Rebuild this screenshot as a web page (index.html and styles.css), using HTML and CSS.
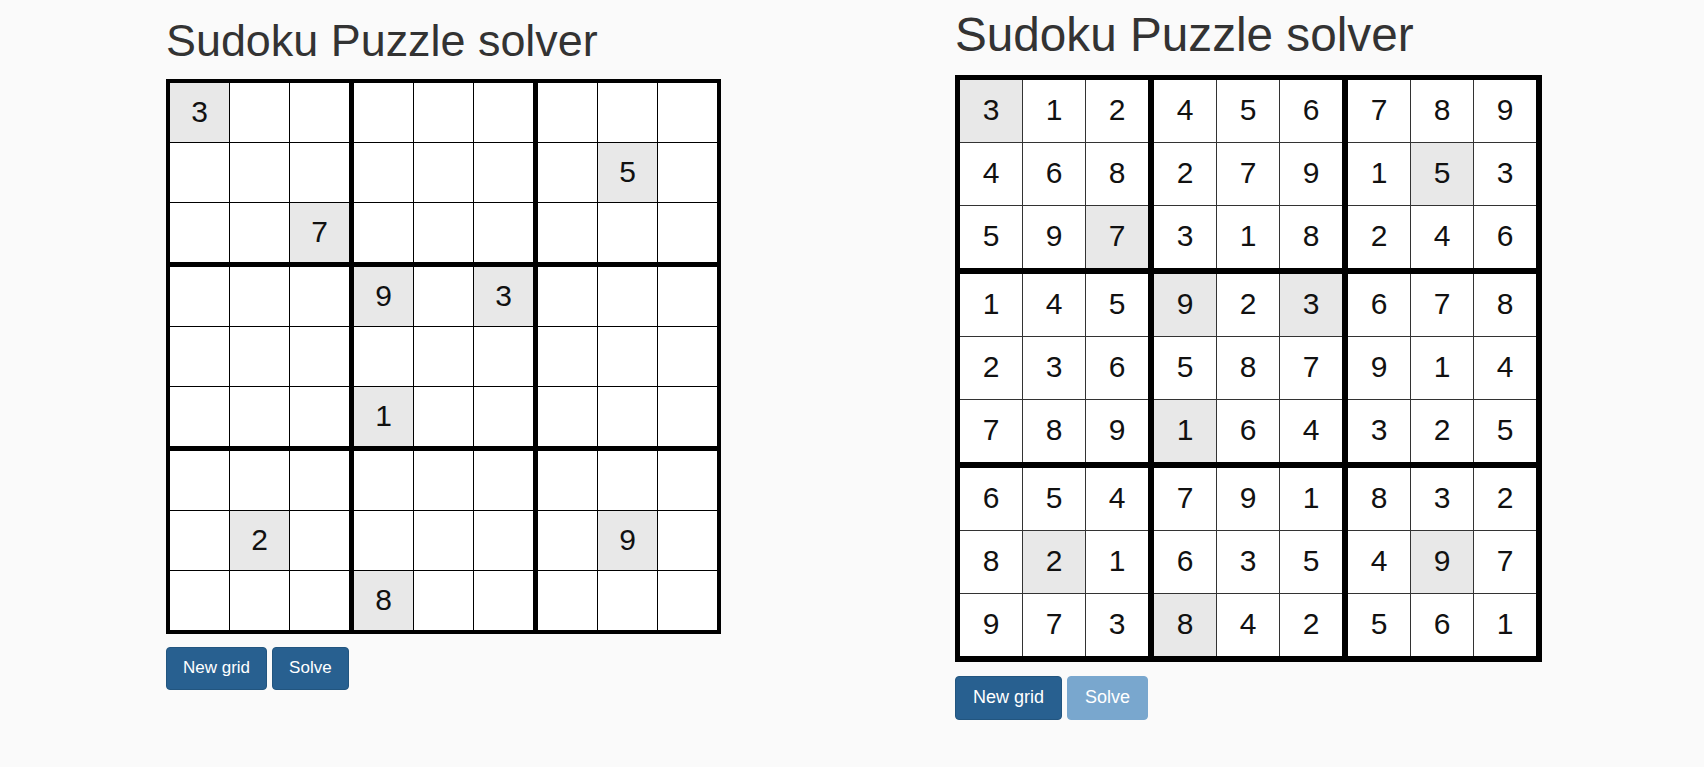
FILE: index.html
```html
<!DOCTYPE html>
<html>
<head>
<meta charset="utf-8">
<title>Sudoku Puzzle solver</title>
<link rel="stylesheet" href="styles.css">
</head>
<body>
<div class="page">
  <section class="panel panel-left">
    <h1 class="title">Sudoku Puzzle solver</h1>
    <div class="board">
      <div class="box"><div class="cell given">3</div><div class="cell"></div><div class="cell"></div><div class="cell"></div><div class="cell"></div><div class="cell"></div><div class="cell"></div><div class="cell"></div><div class="cell given">7</div></div>
      <div class="box"><div class="cell"></div><div class="cell"></div><div class="cell"></div><div class="cell"></div><div class="cell"></div><div class="cell"></div><div class="cell"></div><div class="cell"></div><div class="cell"></div></div>
      <div class="box"><div class="cell"></div><div class="cell"></div><div class="cell"></div><div class="cell"></div><div class="cell given">5</div><div class="cell"></div><div class="cell"></div><div class="cell"></div><div class="cell"></div></div>
      <div class="box"><div class="cell"></div><div class="cell"></div><div class="cell"></div><div class="cell"></div><div class="cell"></div><div class="cell"></div><div class="cell"></div><div class="cell"></div><div class="cell"></div></div>
      <div class="box"><div class="cell given">9</div><div class="cell"></div><div class="cell given">3</div><div class="cell"></div><div class="cell"></div><div class="cell"></div><div class="cell given">1</div><div class="cell"></div><div class="cell"></div></div>
      <div class="box"><div class="cell"></div><div class="cell"></div><div class="cell"></div><div class="cell"></div><div class="cell"></div><div class="cell"></div><div class="cell"></div><div class="cell"></div><div class="cell"></div></div>
      <div class="box"><div class="cell"></div><div class="cell"></div><div class="cell"></div><div class="cell"></div><div class="cell given">2</div><div class="cell"></div><div class="cell"></div><div class="cell"></div><div class="cell"></div></div>
      <div class="box"><div class="cell"></div><div class="cell"></div><div class="cell"></div><div class="cell"></div><div class="cell"></div><div class="cell"></div><div class="cell given">8</div><div class="cell"></div><div class="cell"></div></div>
      <div class="box"><div class="cell"></div><div class="cell"></div><div class="cell"></div><div class="cell"></div><div class="cell given">9</div><div class="cell"></div><div class="cell"></div><div class="cell"></div><div class="cell"></div></div>
    </div>
    <div class="actions">
      <button class="btn">New grid</button>
      <button class="btn">Solve</button>
    </div>
  </section>

  <section class="panel panel-right">
    <h1 class="title">Sudoku Puzzle solver</h1>
    <div class="board">
      <div class="box"><div class="cell given">3</div><div class="cell">1</div><div class="cell">2</div><div class="cell">4</div><div class="cell">6</div><div class="cell">8</div><div class="cell">5</div><div class="cell">9</div><div class="cell given">7</div></div>
      <div class="box"><div class="cell">4</div><div class="cell">5</div><div class="cell">6</div><div class="cell">2</div><div class="cell">7</div><div class="cell">9</div><div class="cell">3</div><div class="cell">1</div><div class="cell">8</div></div>
      <div class="box"><div class="cell">7</div><div class="cell">8</div><div class="cell">9</div><div class="cell">1</div><div class="cell given">5</div><div class="cell">3</div><div class="cell">2</div><div class="cell">4</div><div class="cell">6</div></div>
      <div class="box"><div class="cell">1</div><div class="cell">4</div><div class="cell">5</div><div class="cell">2</div><div class="cell">3</div><div class="cell">6</div><div class="cell">7</div><div class="cell">8</div><div class="cell">9</div></div>
      <div class="box"><div class="cell given">9</div><div class="cell">2</div><div class="cell given">3</div><div class="cell">5</div><div class="cell">8</div><div class="cell">7</div><div class="cell given">1</div><div class="cell">6</div><div class="cell">4</div></div>
      <div class="box"><div class="cell">6</div><div class="cell">7</div><div class="cell">8</div><div class="cell">9</div><div class="cell">1</div><div class="cell">4</div><div class="cell">3</div><div class="cell">2</div><div class="cell">5</div></div>
      <div class="box"><div class="cell">6</div><div class="cell">5</div><div class="cell">4</div><div class="cell">8</div><div class="cell given">2</div><div class="cell">1</div><div class="cell">9</div><div class="cell">7</div><div class="cell">3</div></div>
      <div class="box"><div class="cell">7</div><div class="cell">9</div><div class="cell">1</div><div class="cell">6</div><div class="cell">3</div><div class="cell">5</div><div class="cell given">8</div><div class="cell">4</div><div class="cell">2</div></div>
      <div class="box"><div class="cell">8</div><div class="cell">3</div><div class="cell">2</div><div class="cell">4</div><div class="cell given">9</div><div class="cell">7</div><div class="cell">5</div><div class="cell">6</div><div class="cell">1</div></div>
    </div>
    <div class="actions">
      <button class="btn">New grid</button>
      <button class="btn btn-disabled">Solve</button>
    </div>
  </section>
</div>
</body>
</html>
```

FILE: styles.css
```css
* { box-sizing: border-box; }

html, body {
  margin: 0;
  padding: 0;
  background: #fafafa;
}

body {
  font-family: "Liberation Sans", Arial, sans-serif;
  color: #333;
}

.page {
  display: flex;
  align-items: flex-start;
  padding-left: 166px;
  gap: 234px;
}

.panel { display: flex; flex-direction: column; }

.title {
  margin: 0;
  font-weight: 400;
  line-height: 1.1;
  color: #333;
  white-space: nowrap;
}

.board {
  display: grid;
  background: #000;
}

.box {
  display: grid;
  background: #000;
}

.cell {
  background: #fff;
  color: #111;
  font-size: 30px;
  text-align: center;
}

.cell.given { background: #e8e8e8; }

.actions {
  display: flex;
  gap: 5px;
}

.btn {
  font-family: "Liberation Sans", Arial, sans-serif;
  color: #fff;
  background: #286090;
  border: 1px solid #22557f;
  border-radius: 4px;
  line-height: 1.42857;
}

.btn-disabled {
  background: #79a7ce;
  border-color: #79a7ce;
}

/* left panel (smaller scale) */
.panel-left { padding-top: 16px; width: 555px; }
.panel-left .title { font-size: 44.9px; margin-bottom: 14px; }
.panel-left .board {
  padding: 4px;
  gap: 5px;
  grid-template-columns: repeat(3, 179px);
  grid-template-rows: repeat(3, 179px);
}
.panel-left .box {
  gap: 1px;
  grid-template-columns: repeat(3, 59px);
  grid-template-rows: repeat(3, 59px);
}
.panel-left .cell { line-height: 57px; }
.panel-left .actions { margin-top: 13px; }
.panel-left .btn { font-size: 17px; padding: 8px 16px; }

/* right panel (larger scale) */
.panel-right { padding-top: 9px; width: 587px; }
.panel-right .title { font-size: 47.7px; margin-bottom: 14px; }
.panel-right .board {
  padding: 5px 6px 6px 5px;
  gap: 6px;
  grid-template-columns: repeat(3, 188px);
  grid-template-rows: repeat(3, 188px);
}
.panel-right .box {
  gap: 1px;
  background: #333;
  grid-template-columns: repeat(3, 62px);
  grid-template-rows: repeat(3, 62px);
}
.panel-right .cell { line-height: 60px; }
.panel-right .actions { margin-top: 14px; }
.panel-right .btn { font-size: 18px; padding: 8px 17px; }
```
